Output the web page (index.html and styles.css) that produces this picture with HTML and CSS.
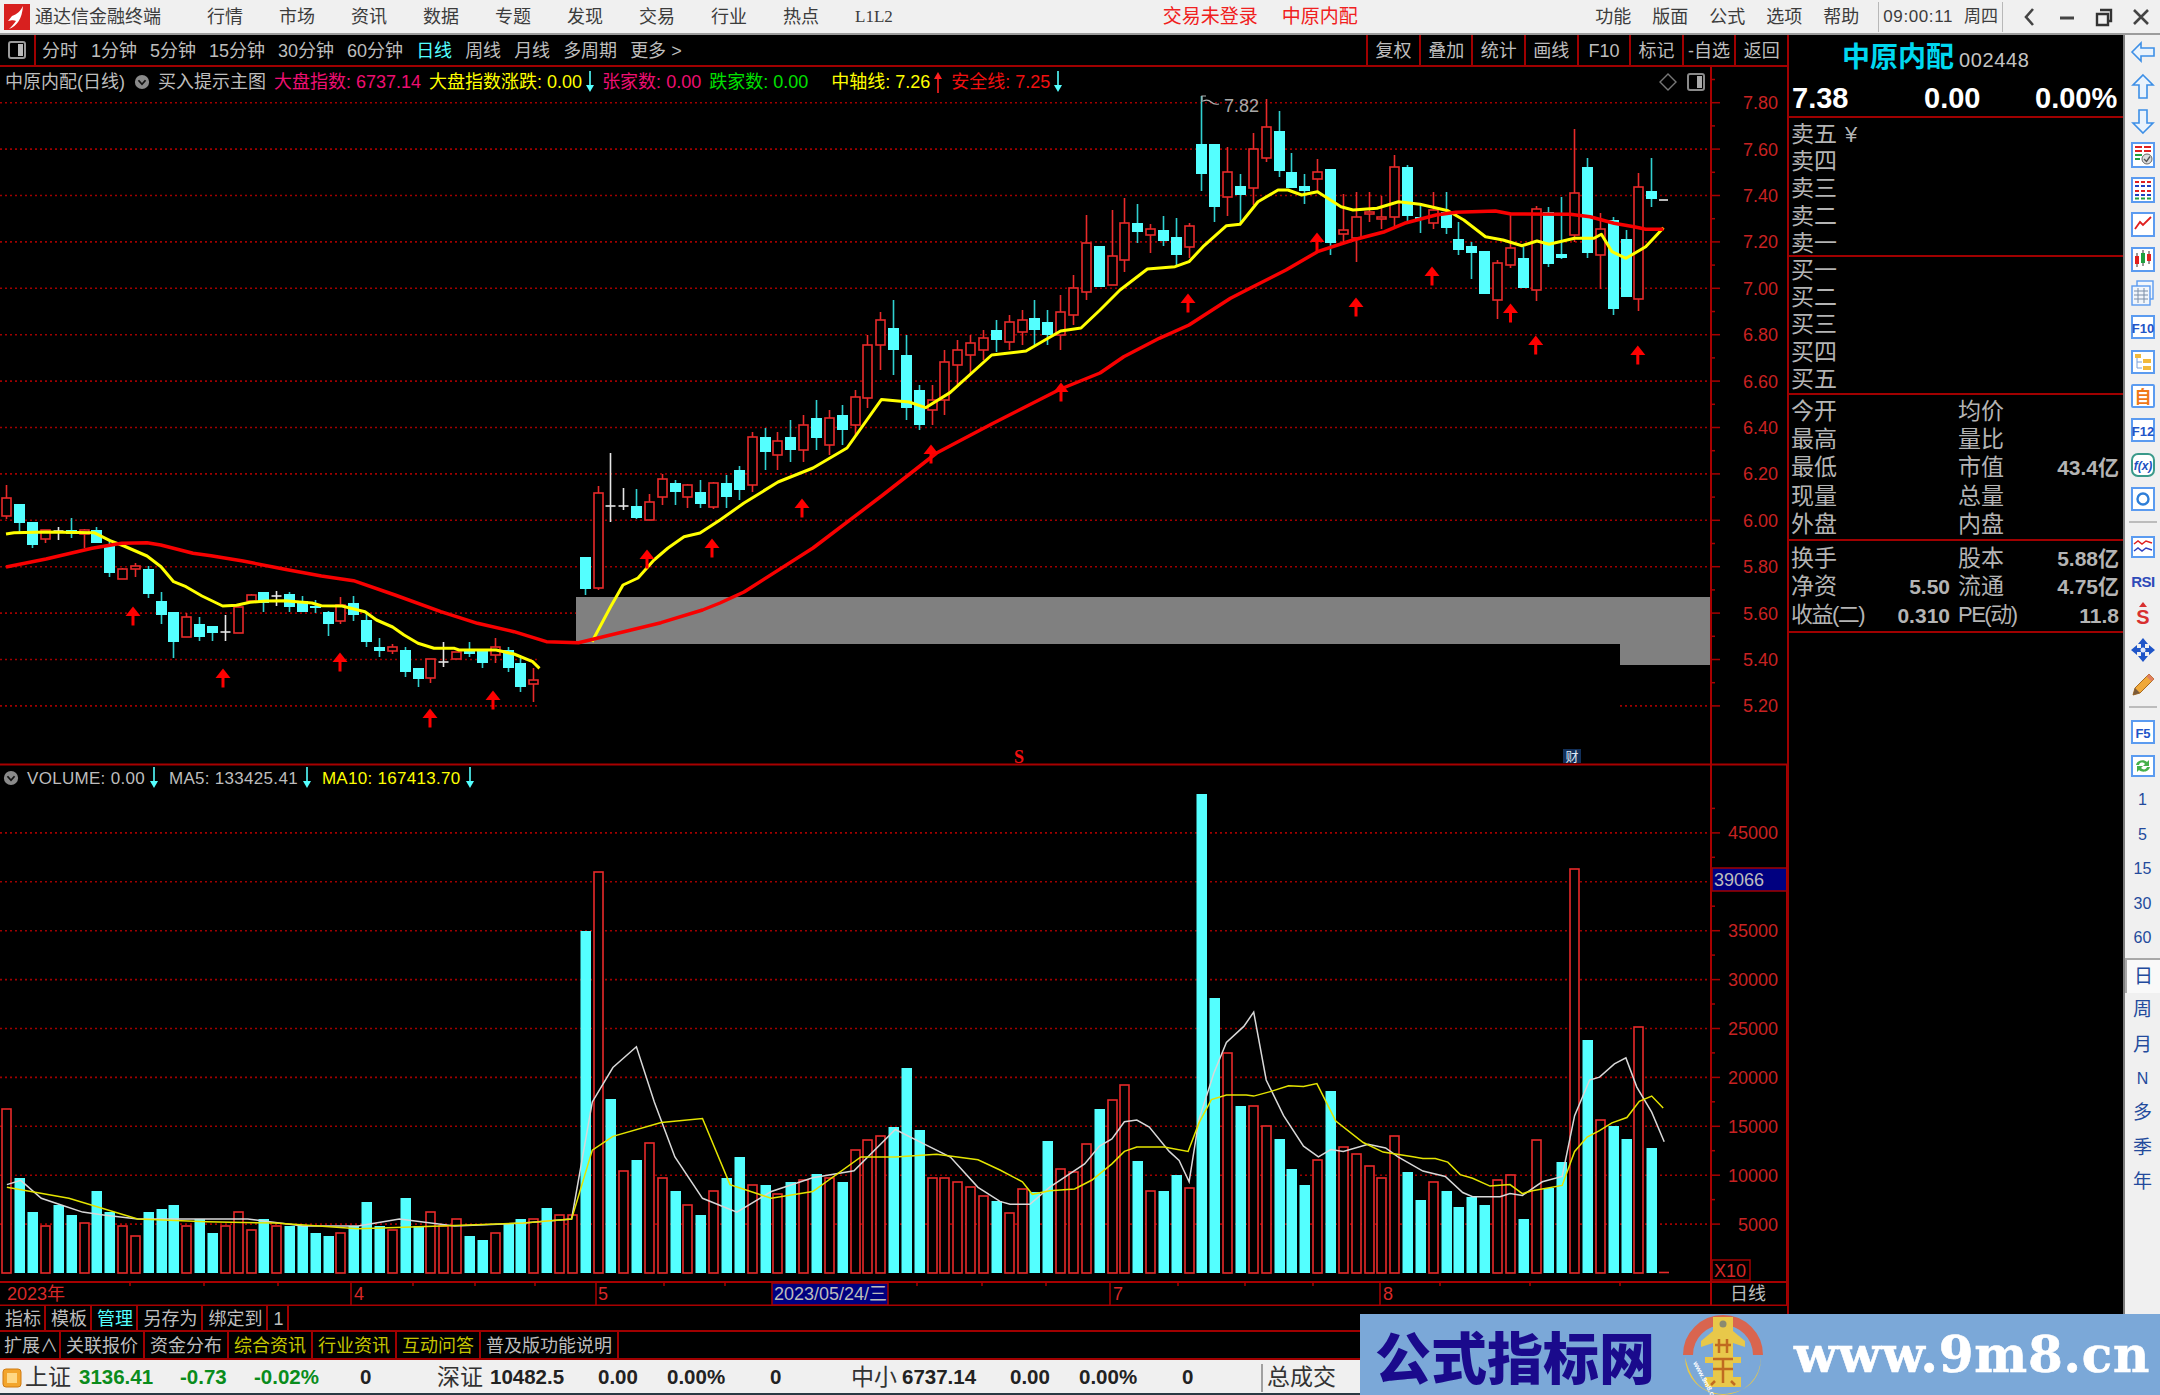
FILE: index.html
```html
<!DOCTYPE html>
<html lang="zh">
<head>
<meta charset="utf-8">
<title>通达信金融终端</title>
<link rel="stylesheet" href="styles.css">
</head>
<body>
<svg class="defs" width="0" height="0">
  <defs>
    <symbol id="dn" viewBox="0 0 10 22"><path d="M5 0V15" stroke="#54ffff" stroke-width="1.6"/><path d="M1 14H9L5 21Z" fill="#54ffff"/></symbol>
    <symbol id="up" viewBox="0 0 10 22"><path d="M5 7V22" stroke="#ff2020" stroke-width="1.6"/><path d="M1 8H9L5 1Z" fill="#ff2020"/></symbol>
    <symbol id="chev" viewBox="0 0 18 18"><circle cx="9" cy="9" r="8" fill="#8a8a8a"/><path d="M5 7L9 11.5L13 7" fill="none" stroke="#111" stroke-width="2"/></symbol>
  </defs>
</svg>
<div class="app">
  <header class="titlebar">
    <svg class="logo" viewBox="0 0 26 26"><rect width="26" height="26" fill="#d8201f"/><path d="M19 2C16 8 13 10 8 12L4 17C8 16 10 16 12 17C10 20 8 22 5 25C13 22 18 15 19 2Z" fill="#fff"/></svg>
    <span class="appname">通达信金融终端</span>
    <nav class="menu">
      <span>行情</span><span>市场</span><span>资讯</span><span>数据</span><span>专题</span><span>发现</span><span>交易</span><span>行业</span><span>热点</span><span class="serif">L1L2</span>
    </nav>
    <span class="redtitle first">交易未登录</span>
    <span class="redtitle">中原内配</span>
    <nav class="menu right">
      <span>功能</span><span>版面</span><span>公式</span><span>选项</span><span>帮助</span>
    </nav>
    <div class="clock"><span class="time">09:00:11</span><span>周四</span></div>
    <div class="winctl">
      <svg viewBox="0 0 20 20"><path d="M13 2L6 10L13 18" fill="none" stroke="#444" stroke-width="2.6"/></svg>
      <svg viewBox="0 0 20 20"><path d="M3 11H17" stroke="#444" stroke-width="3"/></svg>
      <svg viewBox="0 0 20 20"><path d="M6 3H17V14H14M3 7H14V18H3Z" fill="none" stroke="#333" stroke-width="2.4"/></svg>
      <svg viewBox="0 0 20 20"><path d="M3 3L17 17M17 3L3 17" stroke="#444" stroke-width="2.6"/></svg>
    </div>
  </header>

  <div class="workspace">
    <section class="left">
      <div class="toolbar">
        <div class="tb-icon"><svg viewBox="0 0 18 18"><rect x="1" y="1" width="16" height="16" rx="2" fill="none" stroke="#9a9a9a" stroke-width="2"/><rect x="10" y="3" width="5" height="12" fill="#bbb"/></svg></div>
        <div class="periods">
          <span>分时</span><span>1分钟</span><span>5分钟</span><span>15分钟</span><span>30分钟</span><span>60分钟</span><span class="on">日线</span><span>周线</span><span>月线</span><span>多周期</span><span>更多 &gt;</span>
        </div>
        <div class="tb-buttons">
          <span>复权</span><span>叠加</span><span>统计</span><span>画线</span><span>F10</span><span>标记</span><span>-自选</span><span>返回</span>
        </div>
      </div>

      <div class="chart">
        <svg id="chart" class="chart-svg" width="1787" height="1239" viewBox="0 67 1787 1239"></svg>
        <div class="legend legend-main">
          <span class="grey name">中原内配(日线)</span>
          <svg class="chev"><use href="#chev"/></svg>
          <span class="grey">买入提示主图</span>
          <span class="pink">大盘指数: 6737.14</span>
          <span class="yellow">大盘指数涨跌: 0.00</span><svg class="arr"><use href="#dn"/></svg>
          <span class="pink tight">张家数: 0.00</span>
          <span class="green">跌家数: 0.00</span>
          <span class="yellow wide">中轴线: 7.26</span><svg class="arr"><use href="#up"/></svg>
          <span class="red">安全线: 7.25</span><svg class="arr"><use href="#dn"/></svg>
        </div>
        <div class="legend legend-vol">
          <svg class="chev"><use href="#chev"/></svg>
          <span class="grey">VOLUME: 0.00</span><svg class="arr"><use href="#dn"/></svg>
          <span class="grey">MA5: 133425.41</span><svg class="arr"><use href="#dn"/></svg>
          <span class="yellow">MA10: 167413.70</span><svg class="arr"><use href="#dn"/></svg>
        </div>
        <div class="pane-icons">
          <svg viewBox="0 0 18 18"><path d="M9 1L17 9L9 17L1 9Z" fill="none" stroke="#777" stroke-width="1.4"/></svg>
          <svg viewBox="0 0 18 18"><rect x="1" y="1" width="16" height="16" rx="2" fill="none" stroke="#8a8a8a" stroke-width="2"/><rect x="10" y="3" width="5" height="12" fill="#aaa"/></svg>
        </div>
      </div>

      <div class="tabrow tabrow-a">
        <span>指标</span><span>模板</span><span class="cyan">管理</span><span class="pad">另存为</span><span class="pad">绑定到</span><span class="pad">1</span>
      </div>
      <div class="tabrow tabrow-b">
        <span class="ext">扩展∧</span><span>关联报价</span><span>资金分布</span><span class="olive">综合资讯</span><span class="olive">行业资讯</span><span class="olive">互动问答</span><span>普及版功能说明</span>
      </div>
    </section>

    <aside class="quote">
      <div class="q-head">
        <div class="q-name"><b>中原内配</b><span>002448</span></div>
        <div class="q-price"><span>7.38</span><span>0.00</span><span>0.00%</span></div>
      </div>
      <div class="q-book q-sell">
        <div>卖五 <i>¥</i></div><div>卖四</div><div>卖三</div><div>卖二</div><div>卖一</div>
      </div>
      <div class="q-book q-buy">
        <div>买一</div><div>买二</div><div>买三</div><div>买四</div><div>买五</div>
      </div>
      <div class="q-stats q-a">
        <span>今开</span><b></b><span>均价</span><b></b>
        <span>最高</span><b></b><span>量比</span><b></b>
        <span>最低</span><b></b><span>市值</span><b>43.4亿</b>
        <span>现量</span><b></b><span>总量</span><b></b>
        <span>外盘</span><b></b><span>内盘</span><b></b>
      </div>
      <div class="q-stats q-b">
        <span>换手</span><b></b><span>股本</span><b>5.88亿</b>
        <span>净资</span><b>5.50</b><span>流通</span><b>4.75亿</b>
        <span class="nar">收益(二)</span><b>0.310</b><span class="nar">PE(动)</span><b>11.8</b>
      </div>
    </aside>

    <aside class="sidebar">
      <div class="sb"><svg viewBox="0 0 26 26"><path d="M2 13L11 4V9H24V17H11V22Z" class="ar"/></svg></div>
      <div class="sb"><svg viewBox="0 0 26 26"><path d="M13 1L23 11H17V24H9V11H3Z" class="ar"/></svg></div>
      <div class="sb"><svg viewBox="0 0 26 26"><path d="M13 25L23 15H17V2H9V15H3Z" class="ar"/></svg></div>
      <div class="sb"><svg viewBox="0 0 26 26"><rect x="2" y="1" width="22" height="24" class="bx"/><path d="M5 5H12M14 5H21M5 9H12M14 9H21" stroke="#e02020" stroke-width="2"/><path d="M5 13H12M5 17H10" stroke="#20a040" stroke-width="2"/><circle cx="17" cy="17" r="5" fill="#ddd" stroke="#666"/><path d="M14 17L16.5 19.5L20 14.5" fill="none" stroke="#555" stroke-width="1.4"/></svg></div>
      <div class="sb"><svg viewBox="0 0 26 26"><rect x="2" y="1" width="22" height="24" class="bx"/><path d="M5 5H9M11 5H15M17 5H21M5 14H9M11 14H15M17 14H21" stroke="#e02020" stroke-width="2"/><path d="M5 9H9M11 9H15M17 9H21M5 18H9M11 18H15M17 18H21" stroke="#2040c0" stroke-width="2"/><path d="M5 21.500H21" stroke="#20a040" stroke-width="2" stroke-dasharray="4 2"/></svg></div>
      <div class="sb"><svg viewBox="0 0 26 26"><rect x="2" y="2" width="22" height="23" class="bx"/><path d="M5 18L10 11L13 14L21 6" fill="none" stroke="#e02020" stroke-width="1.8"/></svg></div>
      <div class="sb"><svg viewBox="0 0 26 26"><rect x="2" y="2" width="22" height="23" class="bx"/><path d="M7 7V21M13 4V20M19 5V18" stroke="#333" stroke-width="1"/><rect x="5" y="10" width="4" height="8" fill="#e02020"/><rect x="11" y="7" width="4" height="10" fill="#20a040"/><rect x="17" y="8" width="4" height="7" fill="#e02020"/></svg></div>
      <div class="sb"><svg viewBox="0 0 26 26"><rect x="7" y="1" width="16" height="18" class="bx thin"/><rect x="2" y="6" width="18" height="19" class="bx thin"/><path d="M4 11H18M4 15H18M4 19H18M8 8V23M14 8V23" stroke="#7a8ea8" stroke-width="1"/></svg></div>
      <div class="sb"><svg viewBox="0 0 26 26"><rect x="2" y="2" width="22" height="22" class="bx"/><text x="13" y="18.500" class="ict">F10</text></svg></div>
      <div class="sb"><svg viewBox="0 0 26 26"><rect x="2" y="2" width="22" height="22" class="bx"/><path d="M7 8V19H12M7 13H12" fill="none" stroke="#7aa0d8"/><rect x="5" y="5" width="6" height="4" fill="#f2b93b"/><rect x="13" y="10" width="8" height="4" fill="#f2b93b"/><rect x="13" y="17" width="8" height="4" fill="#f2b93b"/></svg></div>
      <div class="sb"><svg viewBox="0 0 26 26"><rect x="2" y="2" width="22" height="22" rx="1" class="bx"/><text x="13" y="20" class="icz">自</text></svg></div>
      <div class="sb"><svg viewBox="0 0 26 26"><rect x="2" y="2" width="22" height="22" class="bx"/><text x="13" y="18.500" class="ict">F12</text></svg></div>
      <div class="sb"><svg viewBox="0 0 26 26"><rect x="2" y="2" width="22" height="22" rx="6" class="bx green"/><text x="13" y="18" class="icf">f(x)</text></svg></div>
      <div class="sb"><svg viewBox="0 0 26 26"><rect x="2" y="2" width="22" height="22" class="bx"/><circle cx="13" cy="13" r="5.500" fill="none" stroke="#2f7fd8" stroke-width="2.400"/></svg></div>
      <div class="sb-sep"></div>
      <div class="sb"><svg viewBox="0 0 26 26"><rect x="2" y="3" width="22" height="20" class="bx"/><path d="M4 10L8 7L12 10L16 7L22 9" fill="none" stroke="#e02020" stroke-width="1.500"/><path d="M4 17L8 14L12 17L16 14L22 16" fill="none" stroke="#3040c0" stroke-width="1.500"/></svg></div>
      <div class="sb"><svg viewBox="0 0 26 26"><text x="13" y="18.500" class="icr">RSI</text></svg></div>
      <div class="sb"><svg viewBox="0 0 26 26"><path d="M13 0L17 5H9Z" fill="#d83030"/><text x="13" y="22" class="ics">S</text></svg></div>
      <div class="sb"><svg viewBox="0 0 26 26"><path d="M13 1L18 7H15V11H19V8L25 13L19 18V15H15V19H18L13 25L8 19H11V15H7V18L1 13L7 8V11H11V7H8Z" fill="#1f55c8"/><circle cx="13" cy="13" r="2.500" fill="#dfe9fb"/></svg></div>
      <div class="sb"><svg viewBox="0 0 26 26"><path d="M3 24L5 17L19 3L24 8L10 22Z" fill="#f0a93a" stroke="#a86a20"/><path d="M19 3L24 8L21.500 10.500L16.500 5.500Z" fill="#e08060"/><path d="M3 24L5 17L10 22Z" fill="#7a5a3a"/></svg></div>
      <div class="sb-sep"></div>
      <div class="sb"><svg viewBox="0 0 26 26"><rect x="2" y="2" width="22" height="22" class="bx"/><text x="13" y="18.500" class="ict">F5</text></svg></div>
      <div class="sb"><svg viewBox="0 0 26 26"><rect x="2" y="3" width="22" height="20" class="bx"/><path d="M6 12C7 7 14 6 17 9L19 7V13H13L15 11C13 9 10 9 9 12Z" fill="#46b04a"/><path d="M20 14C19 19 12 20 9 17L7 19V13H13L11 15C13 17 16 17 17 14Z" fill="#46b04a"/></svg></div>
      <div class="sb txt num">1</div>
      <div class="sb txt num">5</div>
      <div class="sb txt num">15</div>
      <div class="sb txt num">30</div>
      <div class="sb txt num">60</div>
      <div class="sb txt sel">日</div>
      <div class="sb txt">周</div>
      <div class="sb txt">月</div>
      <div class="sb txt num">N</div>
      <div class="sb txt">多</div>
      <div class="sb txt">季</div>
      <div class="sb txt">年</div>
    </aside>
  </div>

  <footer class="status">
    <svg class="st-ic" viewBox="0 0 20 20"><rect x="1" y="1" width="18" height="18" rx="3" fill="#f3a52c" stroke="#d07a10"/><rect x="5" y="5" width="10" height="10" fill="#ffd884"/></svg>
    <span class="st-name">上证</span>
    <span class="st-val up v1">3136.41</span><span class="st-val up v2">-0.73</span><span class="st-val up v3">-0.02%</span><span class="st-val v4">0</span>
    <span class="st-name n2">深证</span>
    <span class="st-val v5">10482.5</span><span class="st-val v6">0.00</span><span class="st-val v7">0.00%</span><span class="st-val v8">0</span>
    <span class="st-name n3">中小</span>
    <span class="st-val v5b">6737.14</span><span class="st-val v6">0.00</span><span class="st-val v7">0.00%</span><span class="st-val v9">0</span>
    <i class="st-sep"></i>
    <span class="st-name n4">总成交</span>
  </footer>

  <div class="watermark">
    <span class="wm-cn">公式指标网</span>
    <svg class="wm-logo" viewBox="0 0 80 80">
      <path d="M5 40A35 35 0 0 1 75 40" fill="none" stroke="#d9654f" stroke-width="10"/>
      <path d="M2 42A38 38 0 0 0 78 42C78 66 62 78 40 79C18 78 8 66 2 42Z" fill="#e8c84a"/>
      <path d="M12 42A28 28 0 0 0 68 42L60 42A20 20 0 0 1 20 42Z" fill="#7ba8d8"/>
      <path d="M30 2H50V16L62 26V32L50 28V42H58V48H50V62H58V72H22V62H30V48H22V42H30V28L18 32V26L30 16Z" fill="#e8c84a"/>
      <circle cx="40" cy="9" r="3.500" fill="#8a8a70"/>
      <path d="M32 30H48M36 24V38M44 24V38M30 44H50M30 54H50M40 44V68M32 66L28 70M48 66L52 70" stroke="#c06a20" stroke-width="2.500" fill="none"/>
      <text class="wm-small" x="10" y="48" transform="rotate(62 10 48)">www.9m8.cn</text>
    </svg>
    <span class="wm-url">www.9m8.cn</span>
  </div>
</div>
<script src="chart.js"></script>
</body>
</html>
```
FILE: styles.css
```css
* { box-sizing: border-box; }
html, body { margin: 0; padding: 0; background: #000; }
body {
  font-family: "Liberation Sans", "Noto Sans CJK SC", sans-serif;
  font-size: 18px;
  line-height: 1;
  overflow: hidden;
}
.defs { position: absolute; }
.app { position: relative; width: 2160px; height: 1395px; display: flex; flex-direction: column; overflow: hidden; }

/* title bar */
.titlebar { height: 35px; flex: none; display: flex; align-items: center; background: #f0f0f0; border-bottom: 2px solid #9c9c9c; color: #3c3c3c; }
.logo { width: 26px; height: 26px; margin-left: 4px; flex: none; }
.appname { margin-left: 5px; font-size: 18px; width: 126px; white-space: nowrap; }
.menu { display: flex; gap: 36px; margin-left: 46px; white-space: nowrap; }
.menu .serif { font-family: "Liberation Serif", serif; font-size: 17px; }
.menu.right { margin-left: auto; gap: 21px; }
.redtitle { color: #f02020; font-size: 19px; margin-left: 24px; white-space: nowrap; }
.redtitle.first { margin-left: 270px; }
.clock { display: flex; align-items: center; gap: 11px; margin-left: 19px; height: 30px; padding: 0 4px; border-left: 1px solid #b8b8b8; border-right: 1px solid #b8b8b8; font-size: 17px; white-space: nowrap; }
.time { letter-spacing: .6px; }
.winctl { display: flex; gap: 17px; margin-left: 17px; margin-right: 9px; }
.winctl svg { width: 20px; height: 20px; }

/* main layout */
.workspace { flex: 1; display: flex; min-height: 0; }
.left { width: 1787px; flex: none; display: flex; flex-direction: column; background: #000; }

.toolbar { height: 32px; flex: none; display: flex; align-items: center; border-bottom: 2px solid #a00000; color: #bdbdbd; white-space: nowrap; }
.tb-icon { width: 36px; height: 30px; border-right: 2px solid #a00000; display: flex; align-items: center; justify-content: center; }
.tb-icon svg { width: 18px; height: 18px; }
.periods { display: flex; gap: 13px; margin-left: 6px; padding-top: 2px; }
.periods .on { color: #54ffff; }
.tb-buttons { display: flex; margin-left: auto; height: 30px; }
.tb-buttons span { width: 52.600px; border-left: 2px solid #a00000; display: flex; align-items: center; justify-content: center; padding-top: 2px; }

.chart { position: relative; height: 1239px; flex: none; }
.chart-svg { display: block; }
.legend { position: absolute; left: 0; display: flex; align-items: center; gap: 8px; white-space: nowrap; height: 28px; }
.legend-main { top: 1px; padding-left: 5px; }
.legend-main .arr { margin-left: -5px; }
.legend-vol { top: 697px; padding-left: 3px; font-size: 17px; letter-spacing: .3px; }
.legend-vol .arr { margin-right: 2px; margin-left: -4px; }
.chev { width: 16px; height: 16px; flex: none; }
.arr { width: 10px; height: 22px; flex: none; }
.name { margin-right: 1px; }
.grey { color: #bdbdbd; }
.pink { color: #ee0f72; }
.yellow { color: #ffff00; }
.green { color: #00e000; }
.red { color: #f01010; }
.cyan { color: #54ffff; }
.olive { color: #c4c400; }
.tight { margin-left: -1px; }
.wide { margin-left: 15px; }
.pane-icons { position: absolute; top: 6px; left: 1659px; display: flex; gap: 10px; }
.pane-icons svg { width: 18px; height: 18px; }

/* chart svg classes */
.dot { stroke: #a00000; stroke-width: 1.600; stroke-dasharray: 2 3; }
.axis { stroke: #a80000; stroke-width: 2; }
.tick { stroke: #a80000; stroke-width: 1.500; }
.rule { stroke: #a80000; stroke-width: 2; }
.lab { fill: #c82222; font-size: 18px; text-anchor: end; }
.lab-l { fill: #d82828; font-size: 18px; }
.lab-g { fill: #bdbdbd; font-size: 18px; }
.lab-m { fill: #a8a8a8; font-size: 18px; }
.c-r { stroke: #e82a2a; fill: #000; stroke-width: 1.600; }
.w-r { stroke: #e82a2a; stroke-width: 1.600; }
.c-c { fill: #54ffff; }
.w-c { stroke: #2fd0d0; stroke-width: 1.600; }
.w-w { stroke: #e6e6e6; stroke-width: 1.600; }
.l-y { stroke: #ffff00; stroke-width: 3; fill: none; stroke-linejoin: round; }
.l-r { stroke: #f80000; stroke-width: 3.500; fill: none; stroke-linejoin: round; }
.m-w { stroke: #d8d8d8; stroke-width: 1.500; fill: none; }
.m-y { stroke: #e4e400; stroke-width: 1.500; fill: none; }
.box-g { fill: #808080; }
.arrow { fill: #ff0000; }
.arrow-s { stroke: #ff0000; stroke-width: 3; }
.peak { stroke: #b0b0b0; stroke-width: 1.200; fill: none; }
.tag-s { fill: #f01010; font: bold 18px "Liberation Serif", serif; text-anchor: middle; }
.tag-b { fill: #12305a; }
.tag-t { fill: #dfe8f5; font-size: 13px; text-anchor: middle; }
.navy { fill: #000080; stroke: #a00000; stroke-width: 1.500; }
.x10 { fill: none; stroke: #a00000; stroke-width: 1.500; }

/* tab rows */
.tabrow { display: flex; flex: none; border-bottom: 2px solid #a00000; color: #bdbdbd; white-space: nowrap; }
.tabrow span { display: flex; align-items: center; border-right: 2px solid #a00000; padding-top: 2px; }
.tabrow-a { height: 26px; }
.tabrow-a span { padding-left: 5px; padding-right: 3px; }
.tabrow-a .pad { padding-left: 5.500px; padding-right: 3.500px; }
.tabrow-b { height: 28px; }
.tabrow-b span { padding-left: 5px; padding-right: 5px; }
.tabrow-b .ext { padding-left: 4px; padding-right: 1px; }

/* quote panel */
.quote { width: 336px; flex: none; border-left: 2px solid #a00000; background: #000; color: #b4b4b4; font-size: 23px; display: flex; flex-direction: column; }
.q-head { height: 83px; flex: none; border-bottom: 2px solid #a00000; }
.q-name { display: flex; align-items: baseline; padding-left: 53px; padding-top: 9px; height: 42px; }
.q-name b { color: #00d8f0; font-size: 28px; font-weight: 700; }
.q-name span { font-size: 20px; margin-left: 5px; color: #c4c4c4; letter-spacing: .6px; }
.q-price { display: flex; padding: 7px 0 0 3px; color: #fff; font-size: 29px; font-weight: 700; }
.q-price span:nth-child(1) { width: 132px; }
.q-price span:nth-child(2) { width: 111px; }
.q-book { flex: none; border-bottom: 2px solid #a00000; padding-left: 2px; }
.q-book div { height: 27.200px; display: flex; align-items: center; white-space: nowrap; }
.q-book i { font-style: normal; margin-left: 8px; font-size: 22px; }
.q-sell { height: 139px; padding-top: 3px; }
.q-buy { height: 138px; padding-top: 0; }
.q-stats { flex: none; display: grid; grid-template-columns: 105px 54px 75px 94px; border-bottom: 2px solid #a00000; padding-left: 2px; align-items: center; }
.q-stats span { white-space: nowrap; }
.q-stats b { text-align: right; font-weight: 700; font-size: 21px; color: #b4b4b4; white-space: nowrap; }
.q-stats span:nth-child(4n+3) { padding-left: 8px; }
.q-a { height: 146px; grid-auto-rows: 28.300px; padding-top: 2px; }
.q-b { height: 92px; grid-auto-rows: 28.500px; padding-top: 3px; }
.q-stats .nar { font-size: 22px; letter-spacing: -1.500px; }

/* sidebar */
.sidebar { width: 37px; flex: none; background: #f0f0f0; border-left: 2px solid #7c7c7c; display: flex; flex-direction: column; align-items: center; }
.sb { height: 34.400px; width: 35px; flex: none; display: flex; align-items: center; justify-content: center; }
.sb svg { width: 26px; height: 26px; overflow: visible; }
.sb-sep { height: 13px; width: 28px; flex: none; }
.sb-sep::after { content: ""; display: block; height: 2px; margin-top: 5px; background: #bcbcbc; }
.ar { fill: #eaf3fc; stroke: #3d8fe6; stroke-width: 1.600; }
.bx { fill: #fff; stroke: #5b9bf0; stroke-width: 2; }
.bx.thin { stroke-width: 1.400; fill: #f2f6fb; }
.bx.green { stroke: #3a9a8a; }
.ict { fill: #1f55c8; font-size: 13px; font-weight: 700; text-anchor: middle; }
.icz { fill: #f07818; font-size: 17px; font-weight: 700; text-anchor: middle; }
.icf { fill: #2050c0; font-size: 12px; font-style: italic; font-weight: 700; text-anchor: middle; }
.icr { fill: #2e4ab8; font-size: 15px; font-weight: 700; letter-spacing: -.5px; text-anchor: middle; }
.ics { fill: #d83030; font-size: 20px; font-weight: 700; text-anchor: middle; }
.txt { color: #234a9c; font-size: 19px; }
.txt.num { font-size: 16px; }
.txt.sel { background: #f9f9f9; border-top: 2px solid #a8a8a8; border-left: 2px solid #a8a8a8; margin-top: 3px; }

/* status bar */
.status { height: 35px; flex: none; display: flex; align-items: center; background: #f0f0f0; border-bottom: 2px solid #2a3a44; color: #222; white-space: nowrap; padding-top: 2px; }
.st-ic { width: 20px; height: 20px; margin-left: 2px; flex: none; }
.st-name { font-size: 23px; color: #333; width: 50px; margin-left: 3px; }
.st-val { font-size: 20.500px; font-weight: 700; }
.st-val.up { color: #0a8c1c; }
.v1 { margin-left: 4px; width: 101px; }
.v2 { width: 74px; }
.v3 { width: 106px; }
.v4 { width: 74px; }
.n2 { width: 53px; }
.v5 { width: 108px; }
.v6 { width: 69px; }
.v7 { width: 103px; }
.v8 { width: 78px; }
.n3 { width: 51px; }
.v5b { width: 108px; }
.v9 { width: 79px; }
.st-sep { width: 2px; height: 28px; background: #a0a0a0; flex: none; }
.n4 { width: 80px; margin-left: 4px; }

/* watermark */
.watermark { position: absolute; left: 1360px; top: 1314px; width: 800px; height: 81px; background: #7ba8d8; display: flex; align-items: center; }
.wm-cn { font-family: "Noto Sans CJK SC", sans-serif; font-weight: 900; font-size: 56px; color: #1a0a8c; margin-left: 15px; white-space: nowrap; width: 308px; }
.wm-logo { width: 80px; height: 80px; flex: none; overflow: visible; }
.wm-small { fill: #fff; font-size: 7px; font-weight: 700; }
.wm-url { font-family: "DejaVu Serif", serif; font-weight: 700; font-size: 50px; letter-spacing: .8px; color: #fff; margin-left: 31px; white-space: nowrap; -webkit-text-stroke: .6px #fff; }
```
FILE: chart.js
```js
(function () {
  var svg = document.getElementById('chart');
  var s = [];
  var X = function (i) { return 6.4 + 12.85 * i; };
  var priceY = function (p) { return 102.7 + (7.8 - p) * 232; };
  var volY = function (v) { return 1273 - v * 0.00978; };
  var pts = function (a) { return a.map(function (p) { return p[0].toFixed(1) + ',' + p[1].toFixed(1); }).join(' '); };
  var line = function (x1, y1, x2, y2, c) { s.push('<line x1="' + x1 + '" y1="' + y1 + '" x2="' + x2 + '" y2="' + y2 + '" class="' + c + '"/>'); };
  var rect = function (x, y, w, h, c) { s.push('<rect x="' + x + '" y="' + y + '" width="' + w + '" height="' + h + '" class="' + c + '"/>'); };
  var text = function (x, y, t, c) { s.push('<text x="' + x + '" y="' + y + '" class="' + c + '">' + t + '</text>'); };

  /* candles: index -> [high, bodyTop, bodyBottom, low, kind] in page pixels */
  var K = [
    [485,498,516,519,'r'],[504,504,523,532,'c'],[522,522,545,548,'c'],[530,530,539,543,'r'],[527,531,531,540,'w'],
    [518,530,534,538,'c'],[529,530,534,548,'r'],[527,530,543,543,'c'],[539,545,573,577,'c'],[568,569,579,579,'r'],
    [563,566,569,577,'r'],[566,569,594,598,'c'],[592,601,615,624,'c'],[612,612,642,658,'c'],[613,617,637,637,'r'],
    [617,624,637,641,'c'],[626,626,633,641,'c'],[615,632,632,641,'w'],[605,607,633,633,'r'],[594,595,601,601,'r'],
    [592,592,603,612,'c'],[591,596,596,606,'w'],[592,594,607,612,'c'],[596,601,612,612,'c'],[600,606,607,613,'c'],
    [611,612,624,636,'c'],[597,605,621,624,'r'],[596,603,615,621,'c'],[612,620,642,647,'c'],[638,647,651,657,'c'],
    [644,647,651,654,'r'],[647,650,672,677,'c'],[668,668,679,687,'c'],[659,659,678,683,'r'],[642,662,662,667,'w'],
    [652,652,659,659,'r'],[642,650,654,657,'c'],[651,651,663,668,'c'],[638,647,655,663,'r'],[647,650,668,672,'c'],
    [658,663,687,692,'c'],[668,680,684,702,'r'],null,null,null,
    [557,557,589,595,'c'],[486,493,588,590,'r'],[453,506,506,522,'w'],[488,506,506,510,'w'],[489,506,518,519,'c'],
    [494,502,520,520,'r'],[474,479,497,505,'r'],[480,483,492,505,'c'],[484,485,497,508,'r'],[480,492,504,508,'c'],
    [482,483,507,509,'r'],[475,483,497,508,'c'],[466,470,490,500,'c'],[432,437,485,492,'r'],[428,437,452,470,'c'],
    [432,441,455,470,'r'],[420,437,450,462,'c'],[415,425,450,462,'r'],[400,418,438,450,'c'],[410,418,445,455,'r'],
    [405,415,430,445,'c'],[390,397,425,435,'r'],[335,345,398,408,'r'],[312,320,345,370,'r'],[300,328,350,375,'c'],
    [335,355,408,420,'c'],[385,390,425,430,'c'],[385,400,410,425,'r'],[350,362,400,415,'r'],[340,350,365,385,'r'],
    [335,343,355,375,'r'],[330,338,350,360,'r'],[320,330,340,352,'c'],[315,322,342,350,'r'],[310,320,332,345,'r'],
    [300,318,330,345,'c'],[310,322,335,345,'c'],[295,312,335,350,'r'],[275,288,315,325,'r'],[215,243,292,300,'r'],
    [246,246,287,287,'c'],[210,256,285,285,'r'],[198,223,260,272,'r'],[204,223,232,243,'c'],[224,229,235,253,'r'],
    [216,230,241,246,'c'],[218,237,255,265,'c'],[223,226,247,258,'r'],[96,144,174,191,'c'],[144,144,207,222,'c'],
    [147,172,197,216,'r'],[174,186,195,223,'c'],[133,149,188,205,'r'],[99,127,158,162,'r'],[111,131,171,177,'c'],
    [153,172,188,188,'c'],[174,186,191,204,'c'],[159,172,179,192,'r'],[169,169,243,255,'c'],[194,230,234,243,'r'],
    [192,217,238,262,'r'],[192,212,214,222,'r'],[196,217,219,229,'r'],[155,167,217,226,'r'],[165,167,216,221,'c'],
    [203,217,219,233,'c'],[192,210,223,229,'r'],[192,212,228,234,'c'],[222,239,250,255,'c'],[242,246,253,279,'c'],
    [251,251,294,294,'c'],[260,263,300,319,'r'],[215,248,265,268,'r'],[247,258,288,288,'c'],[206,209,290,301,'r'],
    [207,212,264,267,'c'],[197,254,258,259,'c'],[129,193,235,242,'r'],[158,167,253,258,'c'],[213,229,255,289,'r'],
    [217,220,309,315,'c'],[230,239,297,297,'c'],[173,187,299,311,'r'],[158,191,199,207,'c']
  ];

  /* volume bars: top pixel and kind */
  var V = [
    [1109,'r'],[1178,'c'],[1212,'c'],[1226,'r'],[1205,'c'],[1215,'c'],[1223,'r'],[1191,'c'],[1212,'c'],[1226,'r'],
    [1236,'r'],[1212,'c'],[1209,'c'],[1205,'c'],[1226,'r'],[1219,'c'],[1233,'c'],[1226,'r'],[1212,'r'],[1230,'r'],
    [1219,'c'],[1226,'r'],[1226,'c'],[1226,'c'],[1233,'c'],[1236,'c'],[1233,'r'],[1226,'c'],[1202,'c'],[1226,'c'],
    [1230,'r'],[1198,'c'],[1226,'c'],[1212,'r'],[1226,'r'],[1219,'r'],[1236,'c'],[1240,'c'],[1233,'r'],[1223,'c'],
    [1219,'c'],[1219,'r'],[1208,'c'],[1215,'r'],[1215,'r'],
    [931,'c'],[872,'r'],[1099,'c'],[1171,'r'],[1160,'c'],[1143,'r'],[1178,'r'],[1191,'c'],[1205,'r'],[1215,'c'],
    [1191,'r'],[1178,'c'],[1157,'c'],[1185,'r'],[1185,'c'],[1194,'r'],[1182,'c'],[1180,'r'],[1174,'c'],[1178,'r'],
    [1182,'c'],[1150,'r'],[1140,'r'],[1136,'r'],[1127,'c'],[1068,'c'],[1130,'c'],[1178,'r'],[1178,'r'],[1182,'r'],
    [1187,'r'],[1196,'r'],[1201,'c'],
    [1213,'r'],[1189,'r'],[1192,'c'],[1141,'c'],[1169,'r'],[1172,'r'],[1144,'r'],[1109,'c'],[1100,'r'],[1085,'r'],
    [1161,'c'],[1191,'r'],[1191,'c'],[1175,'c'],[1188,'r'],[794,'c'],[998,'c'],[1053,'r'],[1106,'c'],[1106,'r'],
    [1126,'r'],[1139,'c'],[1169,'c'],[1185,'c'],[1160,'r'],[1091,'c'],[1147,'r'],[1154,'r'],[1166,'r'],[1178,'r'],
    [1136,'r'],[1172,'c'],[1200,'c'],[1182,'r'],[1191,'c'],[1207,'c'],[1197,'c'],[1205,'c'],[1180,'r'],[1175,'r'],
    [1219,'c'],[1140,'r'],[1188,'c'],[1162,'c'],[869,'r'],[1040,'c'],[1120,'r'],[1126,'c'],[1139,'c'],[1027,'r'],[1148,'c']
  ];

  /* grid and price axis */
  for (var p = 78; p >= 52; p -= 2) {
    var price = p / 10, y = priceY(price), xEnd = 1711;
    if (p === 56) xEnd = 576;
    if (p === 54 || p === 52) xEnd = 540;
    line(0, y, xEnd, y, 'dot');
    if (p === 52) line(1620, y, 1711, y, 'dot');
    line(1711, y, 1720, y, 'tick');
    line(1711, y - 23.2, 1715, y - 23.2, 'tick');
    text(1778, y + 6.5, price.toFixed(2), 'lab');
  }

  /* volume grid */
  for (var v = 5000; v <= 45000; v += 5000) {
    var vy = volY(v);
    line(0, vy, 1711, vy, 'dot');
    line(1711, vy, 1720, vy, 'tick');
    line(1711, vy - 24.5, 1715, vy - 24.5, 'tick');
    if (v !== 40000) text(1778, vy + 6.5, String(v), 'lab');
  }

  /* grey box */
  rect(576, 597, 1135, 47, 'box-g');
  rect(1620, 644, 91, 21, 'box-g');

  /* candles */
  K.forEach(function (k, i) {
    if (!k) return;
    var x = Math.round(X(i)) + 0.5, t = k[4];
    if (t === 'w') {
      line(x, k[0], x, k[3], 'w-w');
      line(x - 5, k[1], x + 5, k[1], 'w-w');
    } else if (t === 'c') {
      line(x, k[0], x, k[3], 'w-c');
      rect(x - 5.5, k[1], 11, Math.max(k[2] - k[1], 2), 'c-c');
    } else {
      line(x, k[0], x, k[3], 'w-r');
      rect(x - 4.5, k[1], 9, Math.max(k[2] - k[1], 2), 'c-r');
    }
  });
  line(1659, 200, 1668, 200, 'w-w');

  /* moving lines of the price pane */
  var yellow1 = [[6,534],[14,532.7],[46,532],[94,532.7],[110,540.7],[124,546],[147,556],[161,566.7],[173.6,581.7],[186,586.7],[202,596],[222.7,606],[236.5,605.3],[250,602.3],[266,601],[284.7,600.7],[312,603],[321.4,605.7],[342,606],[365,611.7],[376.5,620],[392.6,627],[404,635],[418,643.3],[434,648.3],[454.5,648.3],[459,650],[496,650],[514,654],[532.6,661.7],[539.5,668.3]];
  var yellow2 = [[592,641.7],[610.6,606.7],[623,585],[638,578],[654,560],[668,548],[684,536.7],[700,533],[720,520],[744,503],[778,482],[813,468],[847,448],[881.5,399.4],[909,402],[925.6,407.7],[950,392.6],[991.7,355],[1026,351],[1060.6,331],[1081,328],[1100,310],[1120,290],[1147.4,269],[1175,266.7],[1189,261.7],[1203,246.7],[1226.5,225.7],[1240,224.3],[1258,201.7],[1278,190],[1288,190],[1301.7,195],[1317.5,191.7],[1341,206.7],[1353,210],[1377,208.3],[1398.5,201.7],[1420,204.3],[1448,210.7],[1463.8,220],[1485.5,236.7],[1503,240],[1522,245.7],[1537,241],[1549,244.3],[1574.5,238.3],[1594,238.3],[1601.4,234.3],[1612,251.7],[1626,258.3],[1645.7,246.7],[1663.5,227.7]];
  var redLine = [[6,567],[46,559],[92,548.3],[121.7,543.3],[147,542.7],[160.7,545],[193,553.3],[211,555.7],[243,561],[284.7,569.3],[321.4,576],[353.5,580.7],[395,595],[440.8,611.7],[477.5,623.3],[514,631.7],[546.4,641.7],[578.5,642.7],[597,638.3],[661,622.7],[702.5,610],[720,603],[744,592],[813,548],[881.5,496],[936.6,453],[991.7,424],[1060.6,389],[1100,373],[1123.7,356.7],[1159.3,338.3],[1189,325],[1230.5,298.3],[1250,288.3],[1286,270],[1317.5,251.7],[1353,240],[1384.7,231.7],[1404.5,223.3],[1436,215],[1456,212.3],[1495.4,211],[1511,214],[1570.5,214.3],[1590,216.7],[1614,223.3],[1634,226.7],[1645.7,229.3],[1663.5,229.3]];
  s.push('<polyline class="l-y" points="' + pts(yellow1) + '"/>');
  s.push('<polyline class="l-y" points="' + pts(yellow2) + '"/>');
  s.push('<polyline class="l-r" points="' + pts(redLine) + '"/>');

  /* buy arrows: centre x, centre y */
  [[133,616],[223,678],[340,662],[430,718],[493,700],[647,559],[712,548],[802,508],[931,454],[1061,392],[1188,303],[1317,242],[1356,307],[1432,276],[1510.5,313],[1535.7,345],[1637.8,355]].forEach(function (a) {
    s.push('<polygon class="arrow" points="' + a[0] + ',' + (a[1] - 9.5) + ' ' + (a[0] + 7.5) + ',' + a[1] + ' ' + (a[0] - 7.5) + ',' + a[1] + '"/>');
    line(a[0], a[1] - 2, a[0], a[1] + 9.5, 'arrow-s');
  });

  /* peak mark */
  s.push('<path class="peak" d="M1202 102V96H1206M1203 101Q1208 99 1211 102T1219 104"/>');
  text(1224, 112, '7.82', 'lab-m');
  text(1019, 763, 'S', 'tag-s');
  rect(1563, 749, 18, 14, 'tag-b');
  text(1572, 760.5, '财', 'tag-t');

  /* dividers and axis */
  line(0, 764.5, 1787, 764.5, 'rule');
  line(1711, 67, 1711, 1306, 'axis');

  /* volume bars */
  V.forEach(function (b, i) {
    var x = Math.round(X(i)) + 0.5;
    if (b[1] === 'c') rect(x - 5, b[0], 10.5, 1273 - b[0], 'c-c');
    else rect(x - 4.5, b[0], 9, 1273 - b[0], 'c-r');
  });
  line(1659, 1272.5, 1669, 1272.5, 'w-r');

  /* moving lines of the volume pane; the left part is read in the small image, the right in a zoomed one */
  var small = function (a) { return a.map(function (q) { return [q[0] / 0.726, q[1] / 0.726]; }); };
  var zoomed = function (a) { return a.map(function (q) { return [1000 + q[0] / 2.01, 730 + q[1] / 2.8]; }); };
  var mW = small([[5,860],[15,857],[30,870],[45,875],[60,880],[75,882],[100,885],[140,885],[180,885],[220,890],[260,890],[290,885],[330,890],[380,888],[415,885],[430,800],[445,775],[462,760],[475,800],[490,840],[510,870],[535,880],[560,865],[590,855],[620,850],[650,820],[670,830],[690,840],[710,862]]).concat(zoomed([[0,1320],[20,1328],[60,1328],[100,1280],[170,1215],[200,1165],[225,1145],[250,1097],[275,1092],[300,1112],[340,1180],[360,1205],[380,1265],[400,1090],[430,960],[455,875],[490,830],[510,790],[535,980],[570,1080],[610,1165],[640,1195],[665,1175],[690,1180],[740,1160],[775,1170],[800,1195],[850,1235],[895,1250],[930,1295],[950,1307],[1005,1307],[1025,1298],[1050,1303],[1090,1265],[1130,1250],[1155,1080],[1185,980],[1205,972],[1235,935],[1258,918],[1280,1000],[1310,1070],[1335,1153]]));
  var mY = small([[5,862],[50,870],[100,885],[150,887],[200,888],[260,892],[320,890],[380,888],[415,885],[430,835],[445,825],[480,815],[510,812],[530,860],[560,870],[590,865],[625,840],[650,840],[680,838],[710,842]]).concat(zoomed([[0,1232],[45,1265],[65,1300],[100,1290],[150,1285],[185,1260],[225,1215],[250,1180],[275,1168],[330,1168],[378,1180],[400,1100],[425,1035],[455,1022],[495,1022],[510,1025],[545,1012],[580,996],[610,998],[637,990],[675,1095],[730,1155],[770,1182],[830,1195],[850,1200],[875,1200],[900,1210],[925,1245],[950,1255],[985,1277],[1025,1273],[1050,1298],[1070,1290],[1130,1275],[1155,1180],[1180,1140],[1205,1122],[1230,1100],[1260,1085],[1285,1040],[1310,1025],[1333,1058]]));
  s.push('<polyline class="m-w" points="' + pts(mW) + '"/>');
  s.push('<polyline class="m-y" points="' + pts(mY) + '"/>');

  /* highlighted volume tag and X10 */
  rect(1712, 868, 75, 23, 'navy');
  text(1714, 886, '39066', 'lab-g');
  rect(1712, 1260, 38, 20, 'x10');
  text(1714, 1277, 'X10', 'lab-l');

  /* date axis */
  line(0, 1282, 1787, 1282, 'rule');
  line(0, 1305.5, 1711, 1305.5, 'rule');
  line(1787, 764, 1787, 1306, 'axis');
  [130,204,278,413,475,535,664,725,917,982,1046,1178,1245,1313,1440,1530,1620].forEach(function (x) { line(x, 1282, x, 1286, 'tick'); });
  [351,596,1110,1380].forEach(function (x) { line(x, 1282, x, 1305, 'tick'); });
  rect(772, 1283, 116, 22, 'navy');
  text(7, 1300, '2023年', 'lab-l');
  text(354, 1300, '4', 'lab-l');
  text(598, 1300, '5', 'lab-l');
  text(774, 1300, '2023/05/24/三', 'lab-g');
  text(1113, 1300, '7', 'lab-l');
  text(1383, 1300, '8', 'lab-l');
  text(1730, 1300, '日线', 'lab-g');
  line(1711, 1305.5, 1787, 1305.5, 'rule');

  svg.innerHTML = s.join('');
})();
```
